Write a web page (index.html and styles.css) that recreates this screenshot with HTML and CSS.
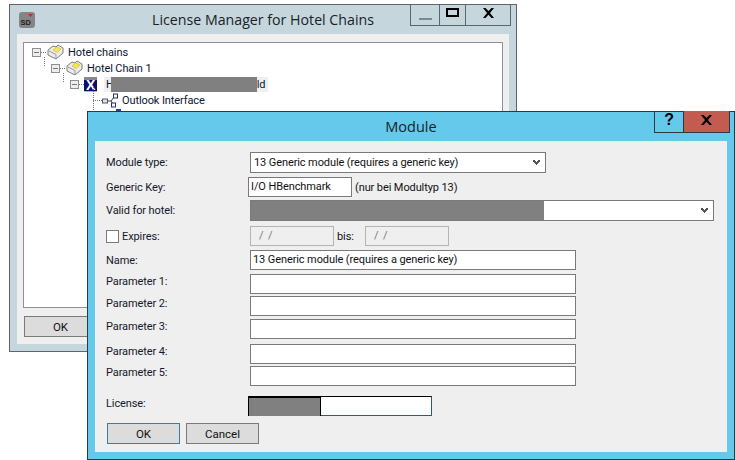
FILE: index.html
```html
<!DOCTYPE html>
<html lang="en">
<head>
    <meta charset="UTF-8">
    <title>License Manager for Hotel Chains</title>
    <link rel="stylesheet" href="styles.css">
</head>
<body>

<div class="window back-window">
    <div class="titlebar">
        <svg class="app-icon" width="16" height="16" viewBox="0 0 16 16">
            <rect x="0" y="0" width="16" height="16" rx="3" fill="#858585"/>
            <path d="M9 2h5l-2.500 3z" fill="#d8202c"/>
            <text x="1.500" y="13" font-family="Liberation Sans" font-size="7.500" font-weight="bold" fill="#222">SD</text>
        </svg>
        <div class="title">License Manager for Hotel Chains</div>
        <div class="caption">
            <div class="cap-btn cap-min"><span class="min-bar"></span></div>
            <div class="cap-btn cap-max"><span class="max-box"></span></div>
            <div class="cap-btn cap-close">
                <svg width="11" height="10" viewBox="0 0 11 10"><path d="M0 0h2.500l3 3 3-3H11L7 5l4 5H8.500l-3-3.200-3 3.200H0l4-5z" fill="#000"/></svg>
            </div>
        </div>
    </div>
    <div class="client">
        <div class="tree">
            <div class="tree-row level-0">
                <span class="expander"></span><span class="dots"></span>
                <svg class="chain-icon" width="17" height="16" viewBox="0 0 17 16"><path d="M1 6l5-4 3 1 2-2 5 3v5l-7 6-8-4z" fill="#ececec" stroke="#7c7c7c"/><path d="M6 6l4-3 4 2-4 3.500z" fill="#f5e84a" stroke="#c9b92a" stroke-width=".6"/><path d="M2 7l7 3.500V15" fill="none" stroke="#999"/></svg>
                <span class="node-text">Hotel chains</span>
            </div>
            <div class="tree-row level-1">
                <span class="expander"></span><span class="dots"></span>
                <svg class="chain-icon" width="17" height="16" viewBox="0 0 17 16"><path d="M1 6l5-4 3 1 2-2 5 3v5l-7 6-8-4z" fill="#ececec" stroke="#7c7c7c"/><path d="M6 6l4-3 4 2-4 3.500z" fill="#f5e84a" stroke="#c9b92a" stroke-width=".6"/><path d="M2 7l7 3.500V15" fill="none" stroke="#999"/></svg>
                <span class="node-text">Hotel Chain 1</span>
            </div>
            <div class="tree-row level-2">
                <span class="expander"></span><span class="dots"></span>
                <span class="x-icon">X</span>
                <span class="node-text selected">H<span class="redact"></span>ld</span>
            </div>
            <div class="tree-row level-3">
                <span class="dots long"></span>
                <svg class="iface-icon" width="16" height="15" viewBox="0 0 16 15"><path d="M6 8h3M9 8l3-4M9 8l2 3" stroke="#444" fill="none"/><rect x=".5" y="6" width="5" height="4" fill="#dfe3ee" stroke="#556"/><rect x="11.500" y="1" width="4" height="4" fill="#fff" stroke="#1f2f70"/><rect x="9.500" y="10" width="4" height="4" fill="#fff" stroke="#1f2f70"/></svg>
                <span class="node-text">Outlook Interface</span>
            </div>
            <div class="tree-row level-4"><span class="next-icon"></span></div>
        </div>
        <button class="btn back-ok">OK</button>
    </div>
</div>

<div class="window module-window">
    <div class="titlebar">
        <div class="title">Module</div>
        <div class="caption">
            <div class="cap-btn cap-help">?</div>
            <div class="cap-btn cap-red">
                <svg width="11" height="10" viewBox="0 0 11 10"><path d="M0 0h2.500l3 3 3-3H11L7 5l4 5H8.500l-3-3.200-3 3.200H0l4-5z" fill="#000"/></svg>
            </div>
        </div>
    </div>
    <div class="client form">
        <div class="row row-type">
            <label>Module type:</label>
            <div class="combo combo-type"><span>13 Generic module (requires a generic key)</span><svg class="chevron" width="7" height="5" viewBox="0 0 7 5"><path d="M0 0h2v1h1v1h1V1h1V0h2v2H6v1H5v1H4v1H3V4H2V3H1V2H0z" fill="#555"/></svg></div>
        </div>
        <div class="row row-key">
            <label>Generic Key:</label>
            <div class="field key-field">I/O HBenchmark</div>
            <span class="hint">(nur bei Modultyp 13)</span>
        </div>
        <div class="row row-hotel">
            <label>Valid for hotel:</label>
            <div class="combo combo-hotel"><span class="hotel-redact"></span><svg class="chevron" width="7" height="5" viewBox="0 0 7 5"><path d="M0 0h2v1h1v1h1V1h1V0h2v2H6v1H5v1H4v1H3V4H2V3H1V2H0z" fill="#555"/></svg></div>
        </div>
        <div class="row row-expires">
            <label class="check-label"><span class="checkbox"></span>Expires:</label>
            <div class="field date-field">/ /</div>
            <span class="bis">bis:</span>
            <div class="field date-field">/ /</div>
        </div>
        <div class="row row-name">
            <label>Name:</label>
            <div class="field wide">13 Generic module (requires a generic key)</div>
        </div>
        <div class="row row-p1 raised"><label>Parameter 1:</label><div class="field wide"></div></div>
        <div class="row row-p2 raised"><label>Parameter 2:</label><div class="field wide"></div></div>
        <div class="row row-p3 raised"><label>Parameter 3:</label><div class="field wide"></div></div>
        <div class="row row-p4 raised"><label>Parameter 4:</label><div class="field wide"></div></div>
        <div class="row row-p5 raised"><label>Parameter 5:</label><div class="field wide"></div></div>
        <div class="row row-license raised">
            <label>License:</label>
            <div class="license-field"><span class="license-redact"></span></div>
        </div>
        <div class="buttons">
            <button class="btn btn-default">OK</button>
            <button class="btn">Cancel</button>
        </div>
    </div>
</div>

</body>
</html>
```

FILE: styles.css
```css
body {
    margin: 0;
    width: 735px;
    height: 460px;
    position: relative;
    overflow: hidden;
    background: #fff;
    font-family: Roboto, "Liberation Sans", Arial, sans-serif;
    font-size: 11px;
    letter-spacing: -0.1px;
    color: #111;
}
.window {
    position: absolute;
    box-sizing: border-box;
    border: 1px solid #5b656c;
    display: flex;
    flex-direction: column;
}
.back-window {
    left: 9px;
    top: 4px;
    width: 508px;
    height: 348px;
    background: #c5d7dd;
}
.module-window {
    left: 87px;
    top: 111px;
    width: 648px;
    height: 349px;
    background: #64c9eb;
    border-color: #2b3a42;
}
.titlebar {
    height: 29px;
    flex: none;
    position: relative;
}
.title {
    font-family: "Open Sans", sans-serif;
    font-size: 14.500px;
    letter-spacing: 0;
    line-height: 30px;
    text-align: center;
    color: #1a2128;
}
.back-window .title {
    font-size: 14.200px;
}
.app-icon {
    position: absolute;
    left: 9px;
    top: 7px;
}
.caption {
    position: absolute;
    top: -1px;
    display: flex;
    border: 1px solid #5b656c;
    border-top: none;
    height: 21px;
}
.back-window .caption {
    left: 400px;
}
.module-window .caption {
    left: 566px;
    border-color: #2b3a42;
}
.cap-btn {
    display: flex;
    align-items: center;
    justify-content: center;
    padding-bottom: 4px;
    box-sizing: border-box;
    border-left: 1px solid #5b656c;
}
.cap-btn:first-child {
    border-left: none;
}
.cap-min {
    width: 28px;
}
.cap-max {
    width: 26px;
}
.cap-close {
    width: 45px;
}
.min-bar {
    width: 13px;
    height: 2px;
    margin-top: 12px;
    background: #7a8a90;
}
.max-box {
    width: 9px;
    height: 5px;
    border: 2px solid #000;
}
.cap-help {
    width: 28px;
    font-family: "Liberation Sans", sans-serif;
    font-weight: bold;
    font-size: 16px;
    color: #000;
}
.cap-red {
    width: 46px;
    background: #c25b50;
    border-left-color: #2b3a42;
}
.client {
    background: #efefef;
    margin: 0 7px 7px;
    flex: 1;
    min-height: 0;
}
.back-window .client {
    padding: 8px 6px 0;
}
.tree {
    box-sizing: border-box;
    height: 266px;
    background: #fff;
    border: 1px solid #8f8f9d;
    padding: 1px 0 0 8px;
    overflow: hidden;
}
.tree-row {
    display: flex;
    align-items: center;
    height: 16px;
    position: relative;
}
/* dotted line running down from each expander / node */
.level-0::after,
.level-1::after {
    content: "";
    position: absolute;
    top: 13px;
    height: 9px;
    border-left: 1px dotted #777;
}
.level-0::after {
    left: 12px;
}
.level-1::after {
    left: 31px;
}
.level-3::before {
    content: "";
    position: absolute;
    left: 61px;
    top: -6px;
    height: 26px;
    border-left: 1px dotted #777;
}
.level-1 {
    padding-left: 19px;
}
.level-2 {
    padding-left: 38px;
}
.level-3 {
    padding-left: 61px;
}
.level-4 {
    padding-left: 84px;
    height: 7px;
    align-items: flex-end;
}
.next-icon {
    width: 5px;
    height: 6px;
    background: #2b3f8c;
}
.expander {
    width: 7px;
    height: 7px;
    border: 1px solid #8f8f8f;
    background: linear-gradient(#777, #777) center / 5px 1px no-repeat, #eee;
    flex: none;
}
.dots {
    width: 5px;
    border-top: 1px dotted #777;
    flex: none;
}
.dots.long {
    width: 9px;
}
.chain-icon {
    margin-left: 1px;
    flex: none;
}
.node-text {
    margin-left: 4px;
    white-space: nowrap;
    color: #0b1630;
}
.x-icon {
    width: 13px;
    height: 15px;
    background: #0c0c6a;
    border-top: 3px solid #888;
    border-bottom: 1px solid #d8c030;
    color: #fff;
    font-family: "Liberation Sans", sans-serif;
    font-weight: bold;
    font-size: 14px;
    line-height: 11px;
    text-align: center;
    box-sizing: border-box;
    flex: none;
}
.selected {
    display: flex;
    align-items: center;
    background: #efefef;
    padding: 0 3px 0 2px;
    height: 15px;
    margin-left: 7px;
}
.redact {
    width: 146px;
    height: 15px;
    margin-left: -3px;
    background: #808080;
}
.btn {
    width: 73px;
    height: 21px;
    padding: 0;
    background: #dcdcdc;
    border: 1px solid #7a7a7a;
    font-family: inherit;
    font-size: 11.500px;
    color: #111;
}
.back-ok {
    display: block;
    margin-top: 8px;
    margin-left: 1px;
}
.btn-default {
    border-color: #3d7bad;
}
.form {
    padding-top: 11px;
    position: relative;
}
.row {
    display: flex;
    align-items: center;
    padding-left: 11px;
    height: 20px;
}
.row label {
    width: 144px;
    flex: none;
    display: flex;
    align-items: center;
    color: #14182a;
}
.raised label {
    margin-bottom: 6px;
}
.row-p5 label {
    margin-bottom: 8px;
}
.combo {
    box-sizing: border-box;
    height: 21px;
    background: #fff;
    border: 1px solid #7a7a7a;
    display: flex;
    align-items: center;
    justify-content: space-between;
    padding-left: 3px;
    padding-right: 5px;
}
.combo-type {
    width: 296px;
}
.combo-hotel {
    width: 464px;
    padding-left: 0;
}
.hotel-redact {
    width: 293px;
    height: 19px;
    background: #808080;
}
.chevron {
    flex: none;
}
.field {
    box-sizing: border-box;
    height: 20px;
    line-height: 18px;
    background: #fff;
    border: 1px solid #7a7a7a;
    padding-left: 2px;
}
.wide {
    width: 326px;
}
.row-type {
    margin-bottom: 5px;
}
.row-key {
    margin-bottom: 3px;
}
.key-field {
    width: 104px;
    margin-left: -2px;
}
.hint {
    margin-left: 3px;
}
.row-hotel {
    height: 21px;
    margin-bottom: 5px;
}
.row-expires {
    margin-bottom: 4px;
}
.check-label {
    padding-top: 1px;
}
.check-label .checkbox {
    box-sizing: border-box;
    width: 13px;
    height: 13px;
    border: 1px solid #7a7a7a;
    background: #fff;
    margin-right: 3px;
}
.date-field {
    width: 84px;
    background: #efefef;
    border-color: #b4b4b4;
    color: #777;
    padding-left: 8px;
    word-spacing: 2px;
}
.bis {
    width: 31px;
    padding-left: 3px;
    box-sizing: border-box;
}
.row-name {
    margin-bottom: 4px;
}
.row-p1 {
    margin-bottom: 2px;
}
.row-p2 {
    margin-bottom: 3px;
}
.row-p3 {
    margin-bottom: 5px;
}
.row-p4 {
    margin-bottom: 2px;
}
.row-p5 {
    margin-bottom: 10px;
}
.license-field {
    box-sizing: border-box;
    width: 184px;
    height: 20px;
    margin-left: -2px;
    border: 1px solid #2a5a80;
    border-top-color: #000;
    background: #fff;
}
.license-redact {
    display: block;
    width: 71px;
    height: 100%;
    margin-left: -1px;
    box-sizing: content-box;
    background: #808080;
    border: solid #000;
    border-width: 2px 1px 0;
    margin-top: -1px;
}
.buttons {
    display: flex;
    gap: 6px;
    margin: 7px 0 0 12px;
}
```
